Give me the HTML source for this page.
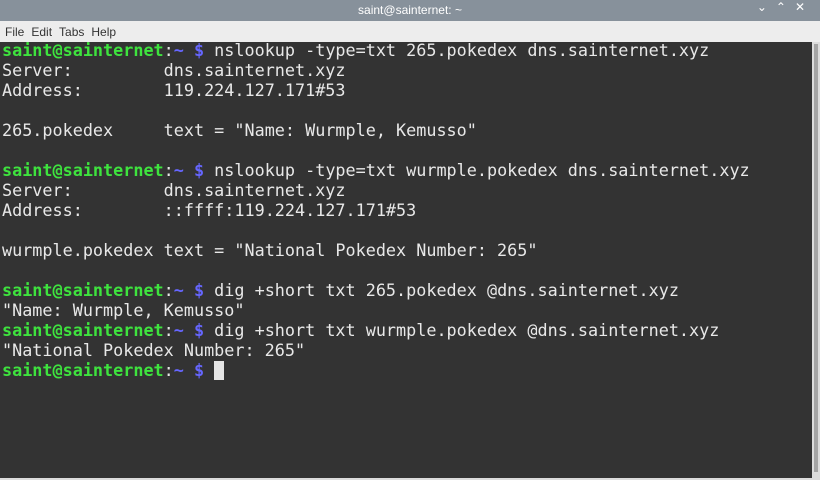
<!DOCTYPE html>
<html><head><style>
body{margin:0;width:820px;height:480px;overflow:hidden;background:#333;font-family:"Liberation Sans",sans-serif}
#t{position:absolute;top:0;left:0;width:820px;height:21px;background:#87919b;color:#fff;font-size:12px;text-align:center;line-height:21px}
#ic{position:absolute;right:6px;top:0;color:#fff;font-size:12px;letter-spacing:9px}
#m{position:absolute;top:21px;left:0;width:820px;height:21px;background:#ededed;font-size:12px;line-height:23px;color:#333}
#m span{margin-left:5px;margin-right:2px}
#term{position:absolute;top:42px;left:0;width:812px;height:436px;background:#333;}
pre{margin:0;padding:0;font-family:"DejaVu Sans Mono",monospace;font-size:16.8px;line-height:20px;color:#e8e8e8;position:absolute;top:-2px;left:2px}
.g{color:#3ee33e;font-weight:bold}.b{color:#6666ff;font-weight:bold}
.cur{display:inline-block;width:10px;height:19px;background:#e5e5e5;vertical-align:-4px}
#sb{position:absolute;top:42px;left:812px;width:8px;height:438px;background:#dcdcdc}
#th{position:absolute;top:2px;left:2px;width:4px;height:428px;background:#a4a4a4}
#bt{position:absolute;top:478px;left:0;width:820px;height:2px;background:#dcdcdc}
</style></head><body>
<div id="t">saint@sainternet: ~</div><div id="ic">⌄⌃✕</div>
<div id="m"><span>File</span><span>Edit</span><span>Tabs</span><span>Help</span></div>
<div id="term"><pre><span class="g">saint@sainternet</span>:<span class="b">~ $</span> nslookup -type=txt 265.pokedex dns.sainternet.xyz
Server:		dns.sainternet.xyz
Address:	119.224.127.171#53

265.pokedex	text = "Name: Wurmple, Kemusso"

<span class="g">saint@sainternet</span>:<span class="b">~ $</span> nslookup -type=txt wurmple.pokedex dns.sainternet.xyz
Server:		dns.sainternet.xyz
Address:	::ffff:119.224.127.171#53

wurmple.pokedex	text = "National Pokedex Number: 265"

<span class="g">saint@sainternet</span>:<span class="b">~ $</span> dig +short txt 265.pokedex @dns.sainternet.xyz
"Name: Wurmple, Kemusso"
<span class="g">saint@sainternet</span>:<span class="b">~ $</span> dig +short txt wurmple.pokedex @dns.sainternet.xyz
"National Pokedex Number: 265"
<span class="g">saint@sainternet</span>:<span class="b">~ $</span> <span class="cur"></span></pre></div>
<div id="sb"><div id="th"></div></div><div id="bt"></div>
</body></html>
